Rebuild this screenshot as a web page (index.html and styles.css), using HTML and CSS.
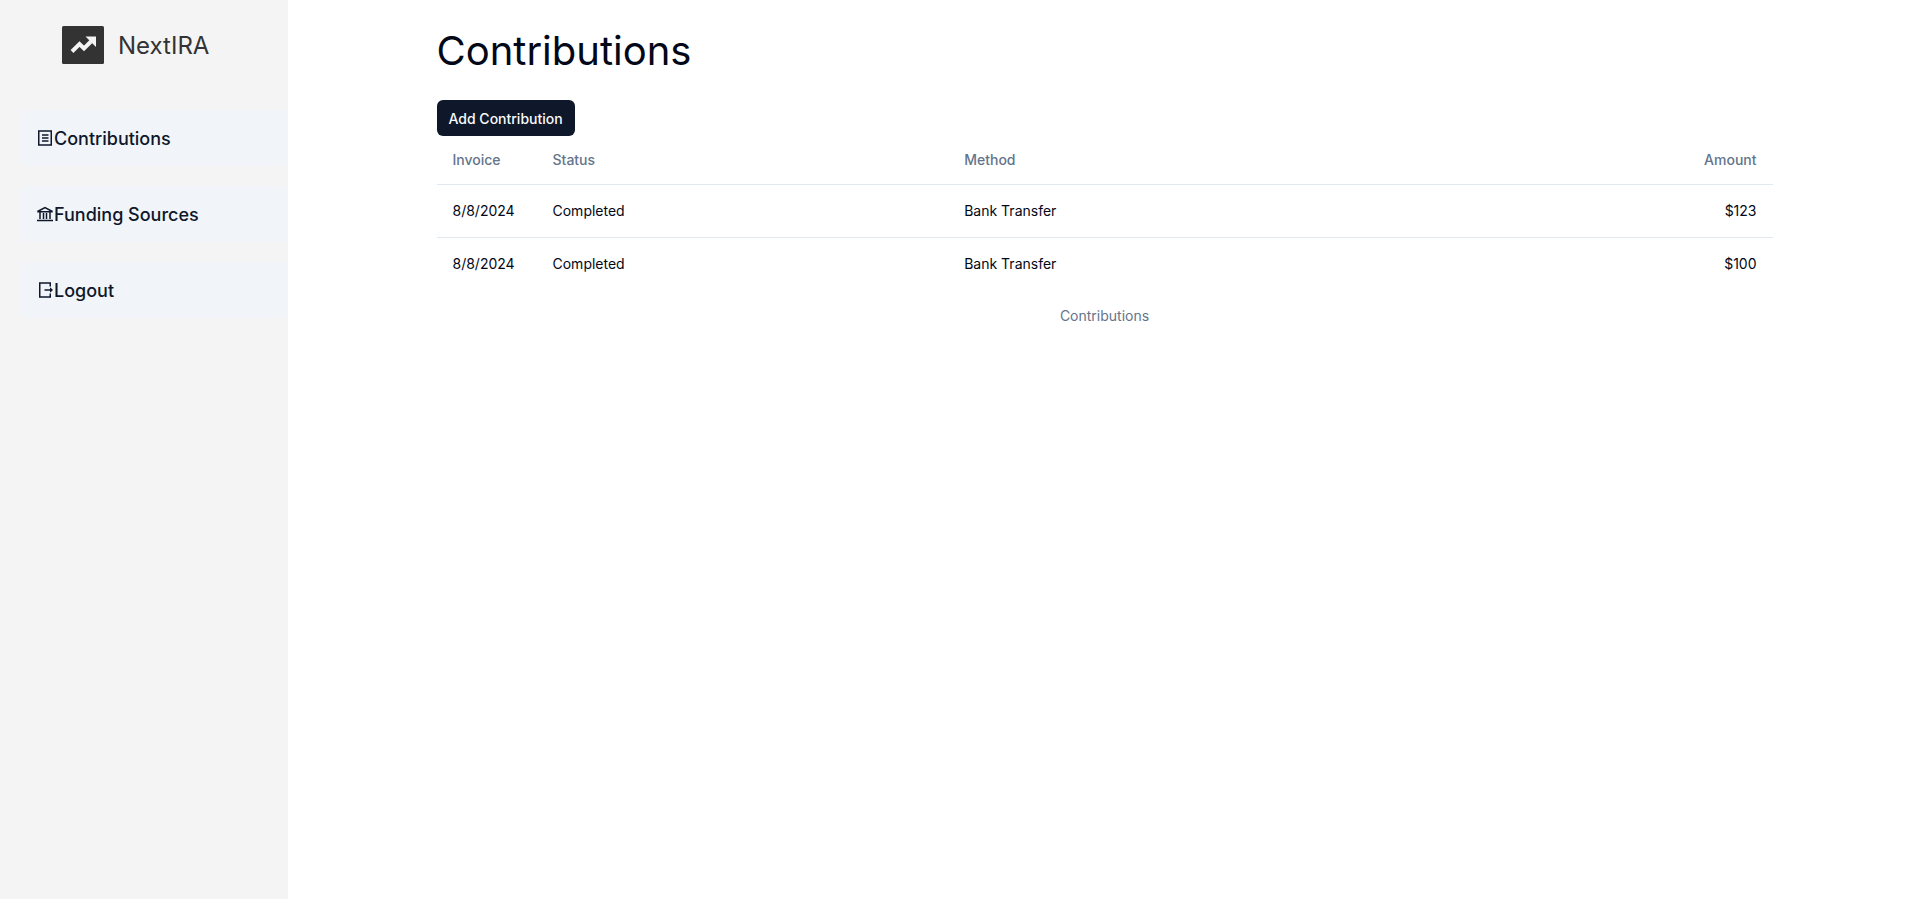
FILE: index.html
```html
<!DOCTYPE html>
<html lang="en">
<head>
<meta charset="utf-8">
<title>NextIRA</title>
<link rel="stylesheet" href="styles.css">
</head>
<body>
<div class="layout">
  <aside class="sidebar">
    <div class="brand">
      <svg class="brand-mark" viewBox="0 0 42 38" aria-hidden="true">
        <rect width="42" height="38" rx="1.5" fill="#333"/>
        <path d="M10 25.500 17.500 18 22 22.500 29 15.500" fill="none" stroke="#f4f4f4" stroke-width="4"/>
        <path d="M23.500 10.500H34V21Z" fill="#f4f4f4"/>
      </svg>
      <span class="brand-name">NextIRA</span>
    </div>
    <nav class="nav">
      <a class="nav-link" href="#contributions">
        <svg class="nav-icon" viewBox="0 0 18 18" aria-hidden="true"><path d="M2.750 2h12.500v14H2.750ZM6 6h6.500M6 9h6.500M6 12h6.500"/></svg>
        <span class="nav-label">Contributions</span>
      </a>
      <a class="nav-link" href="#funding-sources">
        <svg class="nav-icon" viewBox="0 0 18 18" aria-hidden="true"><path d="M1 15.500h16M2 6.250 9 2.500 16 6.250v.5H2ZM4 7v7M7.500 8v6M10.500 8v6M14 7v7"/></svg>
        <span class="nav-label">Funding Sources</span>
      </a>
      <a class="nav-link" href="#logout">
        <svg class="nav-icon" viewBox="0 0 18 18" aria-hidden="true"><path d="M14.250 5.500V2H3.750v14h10.500v-3.500M8.500 9H15"/><path class="nav-icon-fill" d="M14 6.250 17 9 14 11.750Z"/></svg>
        <span class="nav-label">Logout</span>
      </a>
    </nav>
  </aside>
  <main class="main">
    <div class="container">
      <h1 class="title">Contributions</h1>
      <button class="button" type="button">Add Contribution</button>
      <table class="table">
        <caption>Contributions</caption>
        <thead>
          <tr><th class="col-invoice" scope="col">Invoice</th><th scope="col">Status</th><th scope="col">Method</th><th class="amount" scope="col">Amount</th></tr>
        </thead>
        <tbody>
          <tr><td>8/8/2024</td><td>Completed</td><td>Bank Transfer</td><td class="amount">$123</td></tr>
          <tr><td>8/8/2024</td><td>Completed</td><td>Bank Transfer</td><td class="amount">$100</td></tr>
        </tbody>
      </table>
    </div>
  </main>
</div>
</body>
</html>
```
FILE: styles.css
```css
*, *::before, *::after { box-sizing: border-box; }

body {
  margin: 0;
  background: #fff;
  color: #020817;
  font-family: Inter, "Liberation Sans", sans-serif;
  font-size: 14px;
  line-height: 20px;
}

.layout {
  display: grid;
  grid-template-columns: 15% 1fr;
  column-gap: 1px;
  min-height: 100vh;
}

.sidebar {
  padding: 26px 0 0 20px;
  background: #f4f4f4;
}

.brand {
  display: flex;
  align-items: center;
  gap: 14px;
  padding-left: 42px;
}

.brand-mark { width: 42px; height: 38px; }

.brand-name {
  padding-top: 2px;
  color: #333;
  font-size: 24px;
  line-height: 36px;
}

.nav {
  display: flex;
  flex-direction: column;
  gap: 20px;
  margin-top: 46px;
}

.nav-link {
  display: flex;
  align-items: center;
  height: 56px;
  padding: 0 16px;
  border-radius: 6px;
  background: #f1f5f9;
  color: #0f172a;
  font-size: 18px;
  font-weight: 500;
  line-height: 28px;
  text-decoration: none;
}

.nav-label { padding-top: 2px; }

.nav-icon {
  width: 18px;
  height: 18px;
  fill: none;
  stroke: currentColor;
  stroke-width: 1.5;
}

.nav-icon-fill { fill: currentColor; stroke: none; }

.container {
  max-width: 1400px;
  margin: 0 auto;
  padding: 24px 32px;
}

.title {
  margin: 0 0 22px;
  font-size: 40px;
  font-weight: 400;
  line-height: 54px;
}

.button {
  display: block;
  height: 36px;
  padding: 2px 12px 0;
  border: 0;
  border-radius: 6px;
  background: #0f172a;
  color: #f8fafc;
  font: inherit;
  font-weight: 500;
}

.table {
  width: 100%;
  border-collapse: collapse;
}

.table caption {
  caption-side: bottom;
  margin-top: 16px;
  color: #64748b;
}

.table th {
  height: 48px;
  padding: 0 16px;
  color: #64748b;
  font-weight: 500;
  text-align: left;
}

.table td { padding: 16px; }

.table tr { border-bottom: 1px solid #e2e8f0; }

.table tbody tr:last-child { border-bottom: 0; }

.table .col-invoice { width: 100px; }

.table .amount { text-align: right; }
```
